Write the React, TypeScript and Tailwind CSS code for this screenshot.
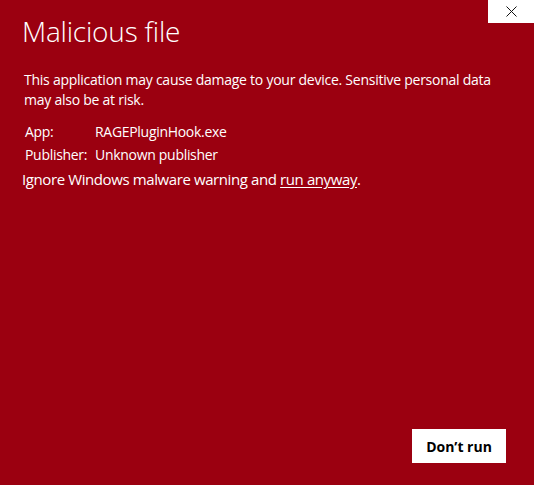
export default function App() {
  return (
    <div
      className="relative flex h-[485px] w-[534px] flex-col bg-[#9b0010] text-white"
      style={{ fontFamily: '"Open Sans", "Noto Sans", sans-serif' }}
    >
      <button className="absolute right-0 top-0 flex h-[23px] w-[46px] items-center justify-center bg-white">
        <svg width="11" height="11" viewBox="0 0 11 11" fill="none" stroke="#111" strokeWidth="1">
          <path d="M0.5 0.5 L10.5 10.5 M10.5 0.5 L0.5 10.5" />
        </svg>
      </button>

      <h1 className="ml-[22px] mt-[12px] text-[28px] font-light leading-[38px] tracking-[-0.2px]">Malicious file</h1>

      <p className="ml-[24px] mt-[20px] w-[480px] text-[14px] leading-[20px] tracking-[-0.25px]">
        This application may cause damage to your device. Sensitive personal data may also be at risk.
      </p>

      <div className="ml-[25px] mt-[12px] flex flex-col gap-[3px] text-[14px] leading-[20px] tracking-[-0.3px]">
        <div className="flex">
          <span className="w-[70px]">App:</span>
          <span>RAGEPluginHook.exe</span>
        </div>
        <div className="flex">
          <span className="w-[70px]">Publisher:</span>
          <span>Unknown publisher</span>
        </div>
      </div>

      <p className="ml-[22px] mt-[3px] text-[15px] leading-[22px] tracking-[-0.4px]">
        Ignore Windows malware warning and <span className="underline underline-offset-2">run anyway</span>.
      </p>

      <div className="mt-auto flex justify-end pb-[22px] pr-[28px]">
        <button className="h-[34px] w-[94px] bg-white text-[14px] font-bold text-black">Don’t run</button>
      </div>
    </div>
  )
}
